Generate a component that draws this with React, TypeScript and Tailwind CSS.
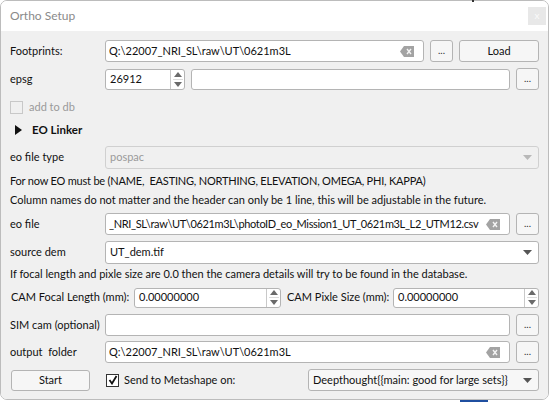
import React from "react";

const font = { fontFamily: 'Lato, "Noto Sans", sans-serif' };

function ClearIcon() {
  return (
    <svg width="14" height="11" viewBox="0 0 14 11" className="shrink-0">
      <path d="M4 0 H14 V11 H4 L0 5.5 Z" fill="#a3a3a3" />
      <path d="M7 3 L11 8 M11 3 L7 8" stroke="#f4f4f4" strokeWidth="1.4" />
    </svg>
  );
}

function DownArrow({ color = "#5a5a5a" }: { color?: string }) {
  return (
    <svg width="9" height="5" viewBox="0 0 9 5" className="shrink-0">
      <path d="M0 0 H9 L4.5 5 Z" fill={color} />
    </svg>
  );
}

function SpinArrows() {
  return (
    <div className="flex h-full w-[14px] shrink-0 flex-col items-center justify-center gap-[2px] border-l border-[#c9c9c9]">
      <svg width="8" height="5" viewBox="0 0 8 5">
        <path d="M0 5 H8 L4 0 Z" fill="#6a6a6a" />
      </svg>
      <div className="h-px w-[10px] bg-[#dcdcdc]" />
      <svg width="8" height="5" viewBox="0 0 8 5">
        <path d="M0 0 H8 L4 5 Z" fill="#6a6a6a" />
      </svg>
    </div>
  );
}

function TextBox({ text, clear, className = "", textClass = "" }: { text?: string; clear?: boolean; className?: string; textClass?: string }) {
  return (
    <div className={`flex h-[22px] items-center overflow-hidden rounded-[3px] border border-[#b4b4b4] bg-white pl-[3px] pr-[9px] ${className}`}>
      <span className={`min-w-0 flex-1 overflow-hidden whitespace-nowrap text-[11px] text-[#111] ${textClass}`}>{text}</span>
      {clear && <ClearIcon />}
    </div>
  );
}

function DotsBtn() {
  return (
    <div className="flex h-[22px] w-[23px] shrink-0 items-center justify-center rounded-[3px] border border-[#b4b4b4] bg-[#f6f6f6] pb-[2px] text-[10px] text-[#333]">
      ...
    </div>
  );
}

function Combo({ text, disabled, className = "" }: { text: string; disabled?: boolean; className?: string }) {
  return (
    <div
      className={`flex h-[23px] items-center rounded-[3px] border pl-[4px] pr-[6px] ${
        disabled ? "border-[#d0d0d0] bg-[#f0f0f0]" : "border-[#b4b4b4] bg-[#f7f7f7]"
      } ${className}`}
    >
      <span className={`min-w-0 flex-1 overflow-hidden whitespace-nowrap text-[11px] ${disabled ? "text-[#9a9a9a]" : "text-[#111]"}`}>{text}</span>
      <DownArrow color={disabled ? "#b8b8b8" : "#555"} />
    </div>
  );
}

function Label({ children, w = "w-[95px]" }: { children: React.ReactNode; w?: string }) {
  return <div className={`${w} shrink-0 whitespace-nowrap text-[11px] text-[#111]`}>{children}</div>;
}

export default function App() {
  return (
    <div className="relative h-[402px] w-[549px] overflow-hidden bg-white" style={font}>
      <div className="absolute left-[472px] top-0 h-[2px] w-[2px] bg-[#333]" />
      <div className="absolute bottom-0 left-[460px] h-[2px] w-[28px] bg-[#1f4fa0]" />
      <div className="flex h-[400px] w-[549px] flex-col overflow-hidden rounded-[7px] border border-[#bcbcbc]">
        {/* title bar */}
        <div className="flex h-[30px] shrink-0 items-center justify-between bg-white pl-[9px] pr-[2px]">
          <span className="text-[12px] text-[#8a8a8a]">Ortho Setup</span>
          <div className="flex h-[18px] w-[18px] items-center justify-center bg-[#e8e8e8] pb-[2px] text-[10px] text-[#fafafa]">x</div>
        </div>
        {/* body */}
        <div className="flex flex-1 flex-col bg-[#f0f0f0] pl-[9px] pr-[9px] pt-[9px]">
          {/* Footprints */}
          <div className="flex h-[22px] items-center">
            <Label>Footprints:</Label>
            <TextBox text={"Q:\\22007_NRI_SL\\raw\\UT\\0621m3L"} clear className="flex-1" />
            <div className="ml-[6px]"><DotsBtn /></div>
            <div className="ml-[6px] flex h-[22px] w-[80px] items-center justify-center rounded-[3px] border border-[#b4b4b4] bg-[#f6f6f6] text-[11px] text-[#111]">
              Load
            </div>
          </div>
          {/* epsg */}
          <div className="mt-[6px] flex h-[22px] items-center">
            <Label>epsg</Label>
            <div className="flex h-[21px] w-[80px] items-center overflow-hidden rounded-[3px] border border-[#b4b4b4] bg-white pl-[4px]">
              <span className="flex-1 text-[11px] text-[#111]">26912</span>
              <SpinArrows />
            </div>
            <TextBox className="ml-[6px] flex-1 !h-[21px]" />
            <div className="ml-[6px]"><DotsBtn /></div>
          </div>
          {/* add to db */}
          <div className="mt-[6px] flex h-[22px] items-center">
            <div className="h-[13px] w-[13px] border border-[#c8c8c8] bg-[#f0f0f0]" />
            <span className="ml-[6px] text-[11px] text-[#9a9a9a]">add to db</span>
          </div>
          {/* EO Linker */}
          <div className="mt-px flex h-[22px] items-center">
            <svg width="7" height="10" viewBox="0 0 7 10" className="ml-[5px]">
              <path d="M0 0 L7 5 L0 10 Z" fill="#111" />
            </svg>
            <span className="ml-[10px] text-[11.5px] font-bold text-[#111]">EO Linker</span>
          </div>
          {/* eo file type */}
          <div className="mt-[5px] flex h-[23px] items-center">
            <Label>eo file type</Label>
            <Combo text="pospac" disabled className="flex-1" />
          </div>
          <div className="mt-[3px] flex h-[19px] items-center whitespace-nowrap text-[11px] tracking-[-0.2px] text-[#111]">
            For now EO must be (NAME,&nbsp; EASTING, NORTHING, ELEVATION, OMEGA, PHI, KAPPA)
          </div>
          <div className="flex h-[19px] items-center whitespace-nowrap text-[11px] text-[#111]">
            Column names do not matter and the header can only be 1 line, this will be adjustable in the future.
          </div>
          {/* eo file */}
          <div className="mt-[3px] flex h-[22px] items-center">
            <Label>eo file</Label>
            <TextBox
              text={"_NRI_SL\\raw\\UT\\0621m3L\\photoID_eo_Mission1_UT_0621m3L_L2_UTM12.csv"}
              clear
              className="flex-1"
              textClass="tracking-[-0.35px]"
            />
            <div className="ml-[6px]"><DotsBtn /></div>
          </div>
          {/* source dem */}
          <div className="mt-[6px] flex h-[23px] items-center">
            <Label>source dem</Label>
            <Combo text="UT_dem.tif" className="flex-1 !bg-white" />
          </div>
          <div className="flex h-[21px] items-center whitespace-nowrap text-[11px] text-[#111]">
            If focal length and pixle size are 0.0 then the camera details will try to be found in the database.
          </div>
          {/* CAM */}
          <div className="mt-[2px] flex h-[21px] items-center">
            <Label w="w-[124px] pl-[1px]">CAM Focal Length (mm):</Label>
            <div className="flex h-[20px] w-[147px] items-center overflow-hidden rounded-[3px] border border-[#b4b4b4] bg-white pl-[4px]">
              <span className="flex-1 text-[11px] text-[#111]">0.00000000</span>
              <SpinArrows />
            </div>
            <span className="ml-[6px] w-[106px] whitespace-nowrap text-[11px] text-[#111]">CAM Pixle Size (mm):</span>
            <div className="flex h-[20px] flex-1 items-center overflow-hidden rounded-[3px] border border-[#b4b4b4] bg-white pl-[4px]">
              <span className="flex-1 text-[11px] text-[#111]">0.00000000</span>
              <SpinArrows />
            </div>
          </div>
          {/* SIM cam */}
          <div className="mt-[6px] flex h-[22px] items-center">
            <Label>SIM cam (optional)</Label>
            <TextBox className="flex-1" />
            <div className="ml-[6px]"><DotsBtn /></div>
          </div>
          {/* output folder */}
          <div className="mt-[5px] flex h-[22px] items-center">
            <Label>output&nbsp; folder</Label>
            <TextBox text={"Q:\\22007_NRI_SL\\raw\\UT\\0621m3L"} clear className="flex-1" />
            <div className="ml-[6px]"><DotsBtn /></div>
          </div>
          {/* bottom */}
          <div className="mt-[6px] flex h-[22px] items-center">
            <div className="ml-px flex h-[21px] w-[79px] items-center justify-center rounded-[3px] border border-[#b4b4b4] bg-[#f6f6f6] text-[11px] text-[#111]">
              Start
            </div>
            <div className="ml-[16px] flex h-[13px] w-[13px] items-center justify-center border border-[#333] bg-white">
              <svg width="10" height="10" viewBox="0 0 10 10">
                <path d="M1.5 5 L4 8.5 L8.5 1" stroke="#111" strokeWidth="1.8" fill="none" />
              </svg>
            </div>
            <span className="ml-[5px] whitespace-nowrap text-[11px] text-[#111]">Send to Metashape on:</span>
            <div className="flex-1" />
            <Combo text="Deepthought{{main: good for large sets}}" className="w-[231px] !h-[22px]" />
          </div>
        </div>
      </div>
    </div>
  );
}
